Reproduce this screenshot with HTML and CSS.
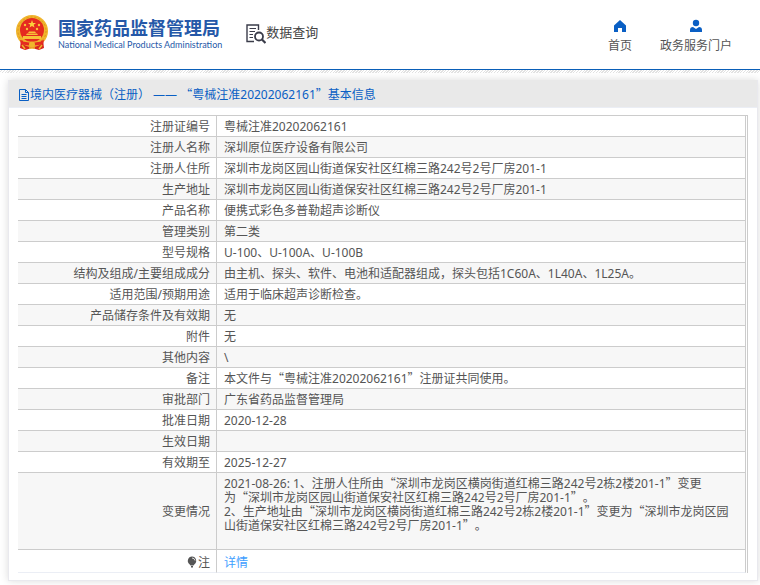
FILE: index.html
```html
<!DOCTYPE html>
<html lang="zh-CN">
  <head>
    <meta charset="UTF-8" />
    <meta name="viewport" content="width=device-width, initial-scale=1.0" />
    <title>国家药品监督管理局 - 数据查询</title>
    <link rel="stylesheet" href="styles.css">
  </head>
  <body>
    <header class="header">
      <a class="logo" href="#">
        <svg class="emblem" viewBox="0 0 32 36" aria-hidden="true">
          <path d="M5 25 L4 33 L9 35 L16 33 L23 35 L28 33 L27 25 Z" fill="#d9241c" />
          <circle cx="16" cy="16" r="16" fill="#f0b52c" />
          <circle cx="16" cy="16" r="14" fill="none" stroke="#dd9320" stroke-width="1" stroke-dasharray="2 2" />
          <circle cx="16" cy="15" r="12" fill="#e52a20" />
          <path d="M16 5 L17 8 L20 8 L17.700 9.800 L18.500 12.500 L16 11 L13.500 12.500 L14.300 9.800 L12 8 L15 8 Z" fill="#fbd23c" />
          <g fill="#f8c238">
            <circle cx="9" cy="10" r="1.200" />
            <circle cx="23" cy="10" r="1.200" />
            <circle cx="11" cy="14" r="1.200" />
            <circle cx="21" cy="14" r="1.200" />
            <path d="M12 18 L13 16.500 H19 L20 18 Z M10 20 L11 18.500 H21 L22 20 Z M7 21 H25 V24 H7 Z" />
          </g>
          <path d="M4 25 Q16 29 28 25 L27 29 Q16 32 5 29 Z" fill="#e52a20" />
          <path d="M7 26 Q16 29 25 26" fill="none" stroke="#f0b52c" />
          <circle cx="16" cy="29.500" r="3" fill="#f0b52c" />
          <path d="M6 30 L9 34 M26 30 L23 34 M13 33 H19" stroke="#f0b52c" stroke-width="1.500" />
        </svg>
        <span class="logo-text">
          <span class="logo-cn">国家药品监督管理局</span>
          <span class="logo-en">National Medical Products Administration</span>
        </span>
      </a>
      <a class="query" href="#">
        <svg class="query-icon" viewBox="0 0 20 20" fill="none" stroke="#3a3c4a" aria-hidden="true">
          <path d="M12.500 6 V1 H1 V17.500 H8" stroke-width="1.400" />
          <path d="M3.500 4.500 H10 M3.500 7.500 H9 M3.500 10.500 H7 M3.500 13.500 H7" stroke-width="1.200" />
          <circle cx="13" cy="12.500" r="4" stroke-width="1.800" />
          <path d="M16 15.500 L19.500 19" stroke-width="2.200" />
        </svg>
        <span>数据查询</span>
      </a>
      <nav class="nav">
        <a href="#">
          <svg viewBox="0 0 14 14" aria-hidden="true">
            <path d="M7 1 L13 6.500 V13 H9 V9 H5 V13 H1 V6.500 Z" fill="#0a5fc4" />
          </svg>
          <span>首页</span>
        </a>
        <a href="#">
          <svg viewBox="0 0 14 14" aria-hidden="true">
            <circle cx="7" cy="4" r="3.200" fill="#0a5fc4" />
            <path d="M1 13 V11 Q1 8 4 8 L7 10 L10 8 Q13 8 13 11 V13 Z" fill="#0a5fc4" />
          </svg>
          <span>政务服务门户</span>
        </a>
      </nav>
    </header>
    <div class="stripe"></div>

    <main class="panel">
      <h1 class="panel-title">
        <svg class="doc-icon" viewBox="0 0 12 12" fill="none" stroke="#0a5fc4" aria-hidden="true">
          <path d="M1.500 0.500 H7.500 L10.500 3.500 V11.500 H1.500 Z M7.500 0.500 V3.500 H10.500 M3.500 5.500 H8.500 M3.500 7.500 H8.500 M3.500 9.500 H8.500" />
        </svg>
        <span>境内医疗器械（注册） —— <span class="quote">“</span>粤械注准20202062161<span class="quote">”</span>基本信息</span>
      </h1>
      <div class="table-wrap">
        <table class="info">
          <tr><th scope="row">注册证编号</th><td>粤械注准20202062161</td></tr>
          <tr><th scope="row">注册人名称</th><td>深圳原位医疗设备有限公司</td></tr>
          <tr><th scope="row">注册人住所</th><td>深圳市龙岗区园山街道保安社区红棉三路242号2号厂房201-1</td></tr>
          <tr><th scope="row">生产地址</th><td>深圳市龙岗区园山街道保安社区红棉三路242号2号厂房201-1</td></tr>
          <tr><th scope="row">产品名称</th><td>便携式彩色多普勒超声诊断仪</td></tr>
          <tr><th scope="row">管理类别</th><td>第二类</td></tr>
          <tr><th scope="row">型号规格</th><td>U-100、U-100A、U-100B</td></tr>
          <tr><th scope="row">结构及组成/主要组成成分</th><td>由主机、探头、软件、电池和适配器组成，探头包括1C60A、1L40A、1L25A。</td></tr>
          <tr><th scope="row">适用范围/预期用途</th><td>适用于临床超声诊断检查。</td></tr>
          <tr><th scope="row">产品储存条件及有效期</th><td>无</td></tr>
          <tr><th scope="row">附件</th><td>无</td></tr>
          <tr><th scope="row">其他内容</th><td>\</td></tr>
          <tr><th scope="row">备注</th><td>本文件与<span class="quote">“</span>粤械注准20202062161<span class="quote">”</span>注册证共同使用。</td></tr>
          <tr><th scope="row">审批部门</th><td>广东省药品监督管理局</td></tr>
          <tr><th scope="row">批准日期</th><td>2020-12-28</td></tr>
          <tr><th scope="row">生效日期</th><td></td></tr>
          <tr><th scope="row">有效期至</th><td>2025-12-27</td></tr>
          <tr class="changes">
            <th scope="row">变更情况</th>
            <td>2021-08-26: 1、注册人住所由<span class="quote">“</span>深圳市龙岗区横岗街道红棉三路242号2栋2楼201-1<span class="quote">”</span>变更<br>为<span class="quote">“</span>深圳市龙岗区园山街道保安社区红棉三路242号2号厂房201-1<span class="quote">”</span>。<br>2、生产地址由<span class="quote">“</span>深圳市龙岗区横岗街道红棉三路242号2栋2楼201-1<span class="quote">”</span>变更为<span class="quote">“</span>深圳市龙岗区园山街道保安社区红棉三路242号2号厂房201-1<span class="quote">”</span>。</td>
          </tr>
          <tr class="note">
            <th scope="row">
              <svg class="bulb" viewBox="0 0 10 12" aria-hidden="true">
                <path d="M5 0.500 A4.300 4.300 0 0 1 7.500 8.200 L6.500 9.500 H3.500 L2.500 8.200 A4.300 4.300 0 0 1 5 0.500 Z M4 10 H6 V11.500 H4 Z" fill="#555" />
                <path d="M5 2 Q7.500 2 8 4.500" fill="none" stroke="#fff" stroke-width="0.800" />
              </svg>注</th>
            <td><a href="#">详情</a></td>
          </tr>
        </table>
      </div>
    </main>
  </body>
</html>
```
FILE: styles.css
```css
body {
  margin: 0;
  font-family: "Noto Sans", "Noto Sans CJK SC", sans-serif;
  font-size: 12px;
  line-height: 14px;
  text-spacing-trim: space-all;
  color: #555;
  background: #fff;
}

a {
  color: inherit;
  text-decoration: none;
}

.header {
  display: flex;
  align-items: flex-start;
  box-sizing: border-box;
  height: 70px;
  padding: 15px 28px 0 16px;
  border-bottom: 1px solid #0a5fb8;
}

.logo {
  display: flex;
  gap: 10px;
  color: #2558a8;
}

.emblem {
  width: 32px;
  height: 36px;
}

.logo-text {
  display: flex;
  flex-direction: column;
  padding-top: 3px;
}

.logo-cn {
  font-size: 18px;
  line-height: 20px;
  font-weight: bold;
}

.logo-en {
  font-family: Lato, sans-serif;
  font-size: 9px;
  line-height: 14px;
  white-space: nowrap;
}

.query {
  display: flex;
  align-items: flex-start;
  margin: 9px 0 0 24px;
  font-size: 13px;
  line-height: 16px;
  color: #444;
}

.query-icon {
  width: 20px;
  height: 20px;
}

.nav {
  display: flex;
  gap: 28px;
  margin: 4px 0 0 auto;
}

.nav a {
  display: flex;
  flex-direction: column;
  align-items: center;
  gap: 6px;
}

.nav svg {
  width: 14px;
  height: 14px;
}

.stripe {
  height: 3px;
  background: repeating-linear-gradient(135deg, #fff 0 1px, #e2e2e2 1px 2px);
}

.panel {
  margin: 7px 2px 4px 8px;
  padding-bottom: 7px;
  border: 1px solid #e9e9ee;
  border-top: none;
  box-shadow: 0 0 8px rgba(0, 0, 0, 0.14);
}

.panel-title {
  display: flex;
  align-items: center;
  height: 25px;
  margin: 0;
  padding: 2px 9px 0;
  border-bottom: 1px solid #ebeef5;
  background: #e9e9e9;
  font-size: 12px;
  font-weight: normal;
  color: #0a5fc4;
}

.doc-icon {
  width: 12px;
  height: 12px;
}

/* full-width quotes, without stretching the line they sit in */
.quote {
  font-family: "Noto Sans CJK SC", sans-serif;
  line-height: 0;
}

.table-wrap {
  margin: 7px 9px 0;
  padding-right: 1px;
  border-top: 1px solid #ccc;
  border-right: 1px solid #ccc;
}

.info {
  width: 100%;
  border-collapse: separate;
  border-spacing: 0;
}

.info th,
.info td {
  height: 18px;
  padding: 2px 6px 0 7px;
  border-right: 1px solid #ccc;
  border-bottom: 1px solid #ccc;
}

.info th {
  width: 185px;
  font-weight: normal;
  text-align: right;
}

.info tr:nth-child(even) {
  background: #f7f7f7;
}

.info .changes th {
  height: 74px;
}

.info .changes td {
  padding-top: 4px;
  padding-bottom: 16px;
  height: 56px;
}

.info .note th,
.info .note td {
  height: 18px;
  padding-top: 4px;
  border-bottom-color: #ebeef5;
}

.note a {
  color: #409eff;
}

.bulb {
  width: 10px;
  height: 12px;
  margin-right: 1px;
  vertical-align: -1px;
}
```
